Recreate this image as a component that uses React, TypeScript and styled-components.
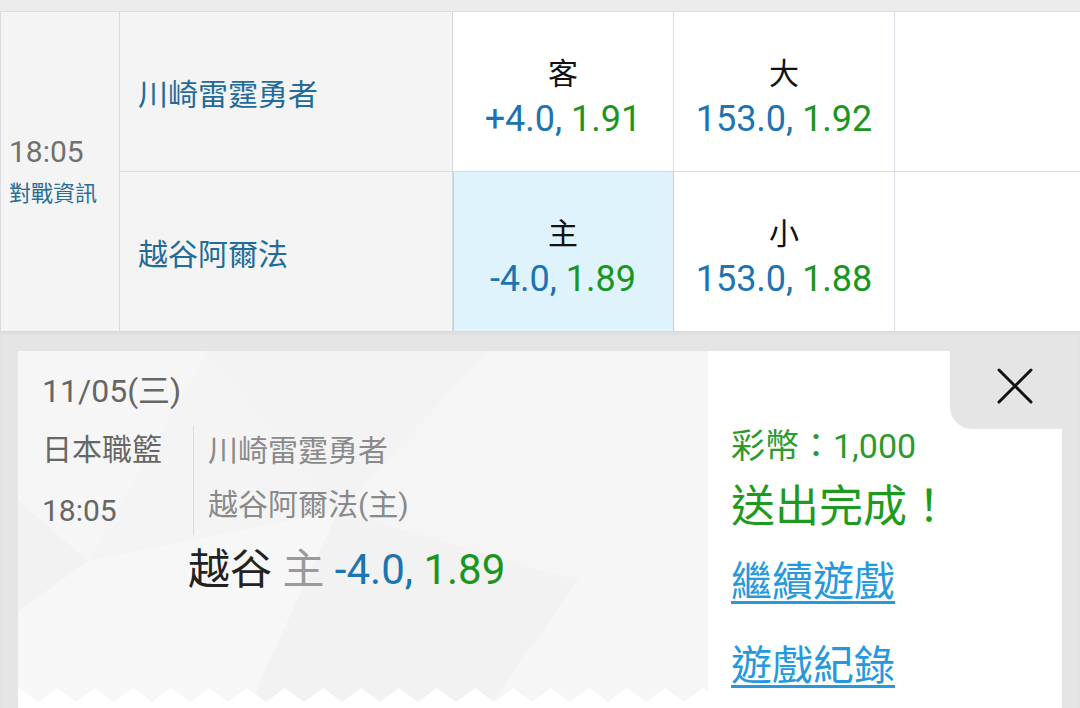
import React from 'react';
import styled, { createGlobalStyle } from 'styled-components';

const Global = createGlobalStyle`
  html, body { margin: 0; padding: 0; background: #e5e5e5; }
  body { font-family: Roboto, "Noto Sans CJK TC", sans-serif; }
  * { box-sizing: border-box; }
`;

const facetSvg = `<svg xmlns='http://www.w3.org/2000/svg' width='690' height='357' viewBox='0 0 690 357'>
<rect width='690' height='357' fill='#f4f4f4'/>
<polygon points='0,0 190,0 70,210 0,150' fill='#f6f6f6'/>
<polygon points='190,0 470,0 320,160' fill='#f3f3f3'/>
<polygon points='70,210 320,160 230,357 0,357 0,260' fill='#f7f7f7'/>
<polygon points='320,160 470,0 690,0 690,120 560,230' fill='#f5f5f5'/>
<polygon points='320,160 560,230 470,357 230,357' fill='#f2f2f2'/>
<polygon points='560,230 690,120 690,357 470,357' fill='#f6f6f6'/>
<polygon points='0,150 70,210 0,260' fill='#f2f2f2'/>
</svg>`;

const zigSvg = `<svg xmlns='http://www.w3.org/2000/svg' width='38' height='14' viewBox='0 0 38 14'><path d='M0 0 L19 14 L38 0 L38 14 L0 14 Z' fill='#ffffff'/></svg>`;

const toUri = (s: string) => `url("data:image/svg+xml,${encodeURIComponent(s)}")`;

const Page = styled.div`
  width: 1080px;
  height: 708px;
  overflow: hidden;
  display: flex;
  flex-direction: column;
  background: #e5e5e5;
`;

const TopStrip = styled.div`
  height: 12px;
  flex-shrink: 0;
  background: #ececec;
  border-bottom: 1px solid #d9dee2;
`;

const Table = styled.div`
  flex-shrink: 0;
  display: grid;
  grid-template-columns: 120px 333px 221px 221px 1fr;
  grid-template-rows: 160px 160px;
  background: #ffffff;
`;

const TimeCell = styled.div`
  grid-row: span 2;
  background: #f4f4f4;
  border-left: 1px solid #d9dee2;
  border-right: 1px solid #d4dbe1;
  border-bottom: 1px solid #d4dbe1;
  display: flex;
  flex-direction: column;
  justify-content: center;
  padding-left: 8px;
`;

const TimeText = styled.div`
  font-size: 30px;
  line-height: 36px;
  color: #707070;
  margin-bottom: 9px;
`;

const InfoLink = styled.div`
  font-size: 22px;
  line-height: 30px;
  color: #2a6d96;
`;

const TeamCell = styled.div`
  background: #f4f4f4;
  border-right: 1px solid #d4dbe1;
  border-bottom: 1px solid #d4dbe1;
  display: flex;
  align-items: center;
  padding-left: 18px;
  font-size: 30px;
  color: #226c97;
`;

const OddsCell = styled.div<{ $selected?: boolean }>`
  background: ${(p) => (p.$selected ? '#dff3fc' : '#ffffff')};
  border-right: 1px solid ${(p) => (p.$selected ? '#b9d3e1' : '#d8dee3')};
  border-bottom: 1px solid #d4dbe1;
  box-shadow: ${(p) => (p.$selected ? 'inset 1px 0 0 #b9d3e1' : 'none')};
  display: flex;
  flex-direction: column;
  align-items: center;
  justify-content: center;
  padding-top: 16px;
`;

const EmptyCell = styled.div`
  border-bottom: 1px solid #d4dbe1;
  background: #ffffff;
`;

const OddsLabel = styled.div`
  font-size: 30px;
  line-height: 38px;
  color: #111111;
`;

const OddsValue = styled.div`
  font-size: 36px;
  line-height: 52px;
  white-space: nowrap;
`;

const Blue = styled.span`
  color: #1c74b1;
`;

const Green = styled.span`
  color: #1a961f;
`;

const Gray = styled.span`
  color: #9a9a9a;
`;

const Below = styled.div`
  flex: 1;
  min-height: 0;
  display: flex;
  padding: 19px 18px 0 18px;
  box-shadow: inset 0 2px 3px rgba(0, 0, 0, 0.04);
`;

const Card = styled.div`
  flex: 1;
  display: flex;
`;

const LeftPanel = styled.div`
  width: 690px;
  display: flex;
  flex-direction: column;
  background-color: #f4f4f4;
  background-image: ${toUri(facetSvg)};
  background-size: 690px 357px;
  background-repeat: no-repeat;
`;

const LeftContent = styled.div`
  padding: 20px 0 0 24px;
  display: flex;
  flex-direction: column;
`;

const DateLine = styled.div`
  font-size: 32px;
  line-height: 40px;
  color: #666666;
`;

const InfoRow = styled.div`
  display: flex;
  margin-top: 15px;
`;

const LeagueCol = styled.div`
  width: 151px;
  display: flex;
  flex-direction: column;
  gap: 13px;
  font-size: 30px;
  line-height: 48px;
  color: #666666;
`;

const TeamsCol = styled.div`
  border-left: 1px solid #dcdcdc;
  padding-left: 14px;
  display: flex;
  flex-direction: column;
  gap: 4px;
  font-size: 30px;
  line-height: 50px;
  color: #8a8a8a;
`;

const Summary = styled.div`
  margin-top: 8px;
  margin-left: 146px;
  font-size: 42px;
  line-height: 54px;
  color: #222222;
  white-space: nowrap;
`;

const Zigzag = styled.div`
  margin-top: auto;
  height: 14px;
  flex-shrink: 0;
  background-image: ${toUri(zigSvg)};
  background-repeat: repeat-x;
  background-size: 38px 14px;
  background-position: 1px 0;
`;

const Tail = styled.div`
  height: 6px;
  flex-shrink: 0;
  background: #ffffff;
`;

const RightPanel = styled.div`
  flex: 1;
  background: #ffffff;
  display: flex;
  flex-direction: column;
`;

const PanelHeader = styled.div`
  display: flex;
  justify-content: flex-end;
`;

const CloseBox = styled.div`
  width: 112px;
  height: 78px;
  background: #e5e5e5;
  border-bottom-left-radius: 22px;
  padding: 17px 0 0 47px;
`;

const RightContent = styled.div`
  padding-left: 23px;
  display: flex;
  flex-direction: column;
`;

const Coins = styled.div`
  font-size: 34px;
  line-height: 34px;
  color: #2d9a2d;
  white-space: nowrap;
`;

const Done = styled.div`
  margin-top: 16px;
  font-size: 44px;
  line-height: 56px;
  color: #1e9b1e;
  white-space: nowrap;
`;

const LinkText = styled.a<{ $gap: number }>`
  margin-top: ${(p) => p.$gap}px;
  font-size: 41px;
  line-height: 56px;
  color: #2699dc;
  text-decoration: underline;
  text-decoration-thickness: 3px;
  text-underline-offset: 5px;
  white-space: nowrap;
  cursor: pointer;
`;

const CloseIcon = () => (
  <svg width="36" height="36" viewBox="0 0 36 36">
    <path d="M2 2 L34 34 M34 2 L2 34" stroke="#111" strokeWidth="3" strokeLinecap="round" fill="none" />
  </svg>
);

type Bet = { label: string; line: string; price: string; selected?: boolean };

const rows: { team: string; bets: Bet[] }[] = [
  {
    team: '川崎雷霆勇者',
    bets: [
      { label: '客', line: '+4.0,', price: '1.91' },
      { label: '大', line: '153.0,', price: '1.92' },
    ],
  },
  {
    team: '越谷阿爾法',
    bets: [
      { label: '主', line: '-4.0,', price: '1.89', selected: true },
      { label: '小', line: '153.0,', price: '1.88' },
    ],
  },
];

export default function App() {
  return (
    <>
      <Global />
      <Page>
        <TopStrip />
        <Table>
          <TimeCell>
            <TimeText>18:05</TimeText>
            <InfoLink>對戰資訊</InfoLink>
          </TimeCell>
          {rows.map((r) => (
            <React.Fragment key={r.team}>
              <TeamCell>{r.team}</TeamCell>
              {r.bets.map((b) => (
                <OddsCell key={b.label} $selected={b.selected}>
                  <OddsLabel>{b.label}</OddsLabel>
                  <OddsValue>
                    <Blue>{b.line}</Blue> <Green>{b.price}</Green>
                  </OddsValue>
                </OddsCell>
              ))}
              <EmptyCell />
            </React.Fragment>
          ))}
        </Table>
        <Below>
          <Card>
            <LeftPanel>
              <LeftContent>
                <DateLine>11/05(三)</DateLine>
                <InfoRow>
                  <LeagueCol>
                    <div>日本職籃</div>
                    <div>18:05</div>
                  </LeagueCol>
                  <TeamsCol>
                    <div>川崎雷霆勇者</div>
                    <div>越谷阿爾法(主)</div>
                  </TeamsCol>
                </InfoRow>
                <Summary>
                  越谷 <Gray>主</Gray> <Blue>-4.0,</Blue> <Green>1.89</Green>
                </Summary>
              </LeftContent>
              <Zigzag />
              <Tail />
            </LeftPanel>
            <RightPanel>
              <PanelHeader>
                <CloseBox>
                  <CloseIcon />
                </CloseBox>
              </PanelHeader>
              <RightContent>
                <Coins>彩幣：1,000</Coins>
                <Done>送出完成！</Done>
                <LinkText $gap={19}>繼續遊戲</LinkText>
                <LinkText $gap={28}>遊戲紀錄</LinkText>
              </RightContent>
            </RightPanel>
          </Card>
        </Below>
      </Page>
    </>
  );
}
